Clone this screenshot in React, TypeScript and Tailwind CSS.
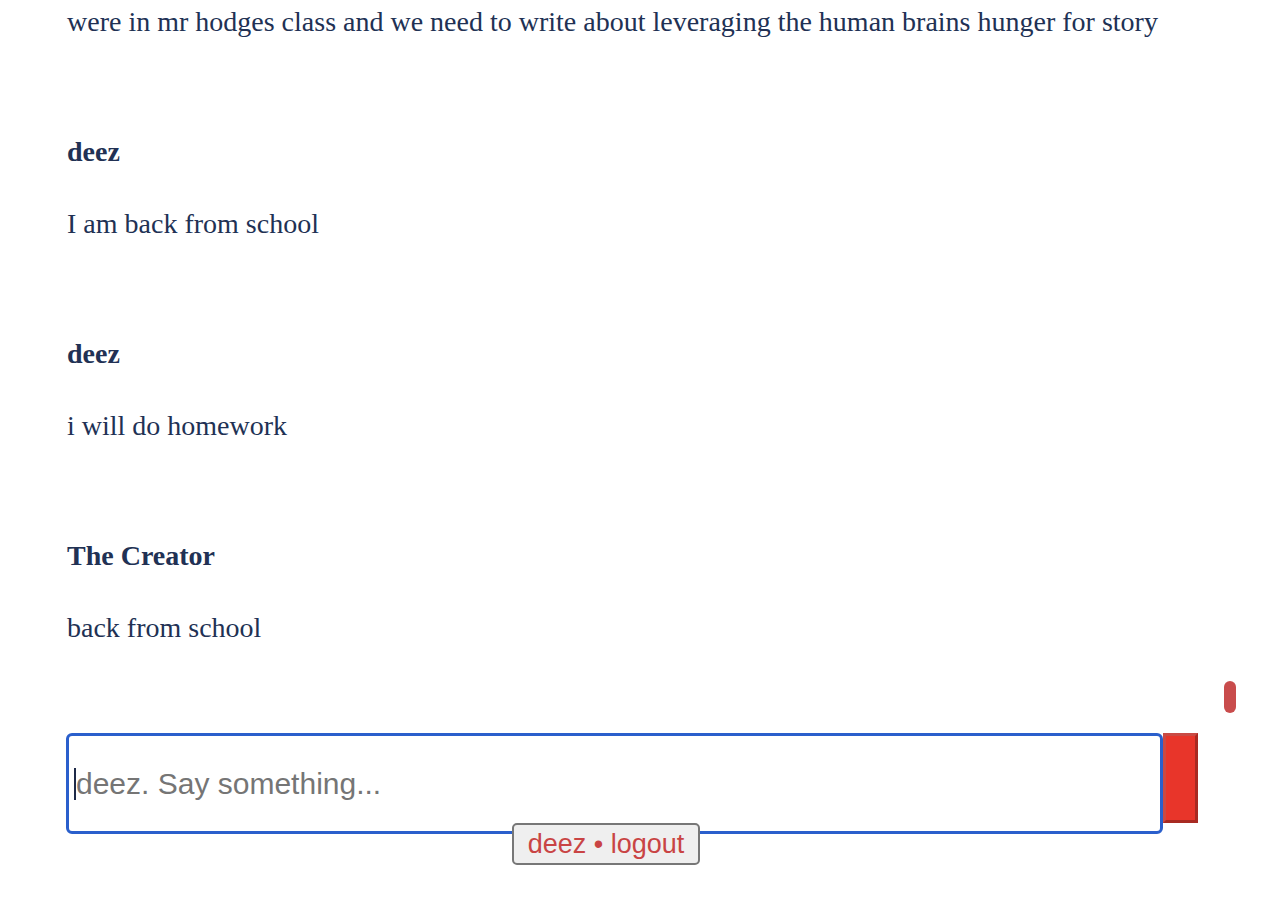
import React from "react";

const msgs = [
  { name: "deez", text: "I am back from school" },
  { name: "deez", text: "i will do homework" },
  { name: "The Creator", text: "back from school" },
];

export default function App() {
  return (
    <div className="relative w-[1286px] h-[900px] bg-white overflow-hidden">
      <div className="pl-[67px] pt-[7px] flex flex-col text-[#213154] text-[28px] leading-[30px]" style={{ fontFamily: '"Liberation Serif", serif' }}>
        <div className="whitespace-nowrap">were in mr hodges class and we need to write about leveraging the human brains hunger for story</div>
        {msgs.map((m, i) => (
          <div key={i} className="flex flex-col mt-[100px]">
            <div className="font-bold">{m.name}</div>
            <div className="mt-[42px]">{m.text}</div>
          </div>
        ))}
      </div>
      <div className="absolute left-[1224px] top-[681px] w-[12px] h-[32px] rounded-full bg-[#c94c4c]" />
      <div className="mt-[90px] ml-[66px] flex items-start relative">
        <div className="w-[1097px] h-[101px] border-[3px] border-[#2a5fcc] rounded-[6px] flex items-center pl-[5px]">
          <div className="w-[2px] h-[32px] bg-[#1e2a48]" />
          <span className="text-[30px] text-[#757575]" style={{ fontFamily: '"Liberation Sans", Arial, sans-serif' }}>deez. Say something...</span>
        </div>
        <div className="w-[35px] h-[90px] bg-[#e8352a] border-[3px] border-t-[#c94a44] border-l-[#c94a44] border-r-[#a82a22] border-b-[#a82a22]" />
        <div className="absolute left-[446px] top-[90px] w-[188px] h-[42px] bg-[#efefef] border-2 border-[#777] rounded-[5px] flex items-center justify-center text-[27px] text-[#c94444]" style={{ fontFamily: '"Liberation Sans", Arial, sans-serif' }}>
          deez • logout
        </div>
      </div>
    </div>
  );
}
